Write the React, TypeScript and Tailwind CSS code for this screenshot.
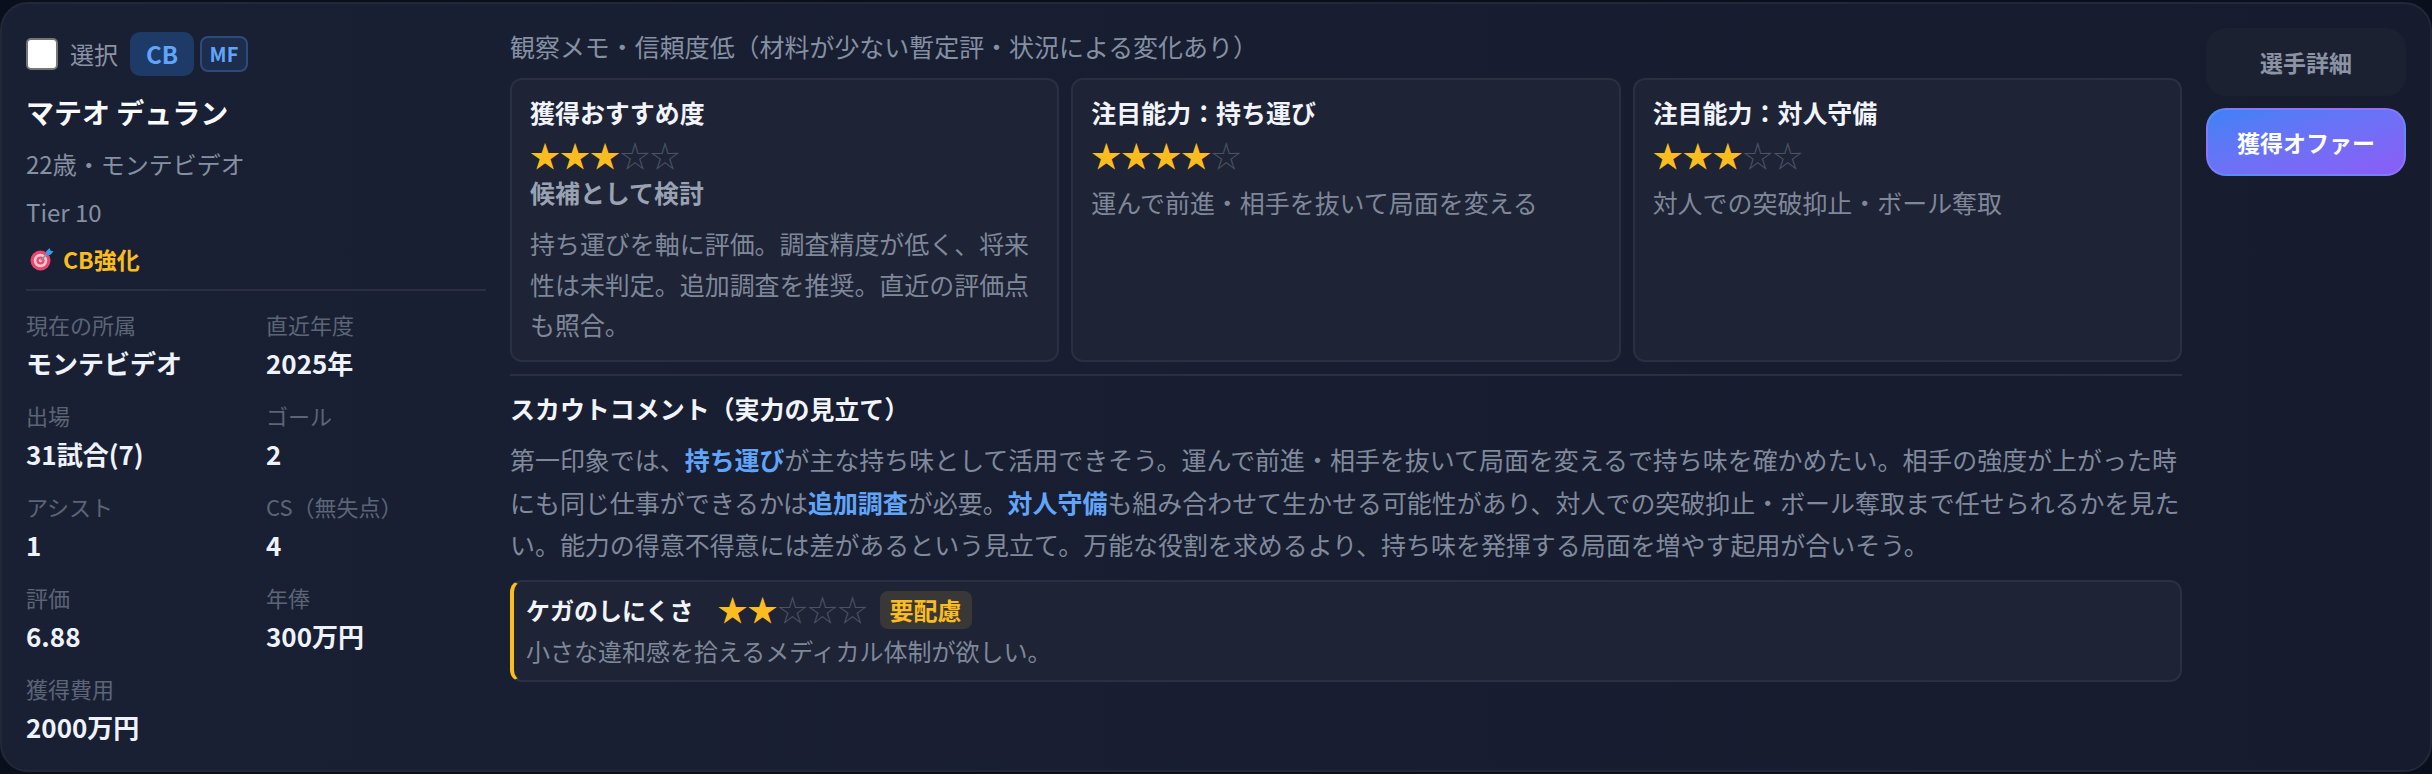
const fontStack = '[font-family:"Noto_Sans_CJK_JP","Noto_Sans",sans-serif]';

interface Stat {
  label: string;
  value: string;
}

const stats: Stat[] = [
  { label: '現在の所属', value: 'モンテビデオ' },
  { label: '直近年度', value: '2025年' },
  { label: '出場', value: '31試合(7)' },
  { label: 'ゴール', value: '2' },
  { label: 'アシスト', value: '1' },
  { label: 'CS（無失点）', value: '4' },
  { label: '評価', value: '6.88' },
  { label: '年俸', value: '300万円' },
  { label: '獲得費用', value: '2000万円' },
];

function Stars({ count }: { count: number }) {
  return (
    <span className="inline-flex text-[30px] leading-[40px]">
      {[1, 2, 3, 4, 5].map(n => (
        <span key={n} className={n <= count ? 'text-[#fbbc1f]' : 'text-[#4b5264]'}>
          {n <= count ? '★' : '☆'}
        </span>
      ))}
    </span>
  );
}

function TargetIcon() {
  return (
    <svg width="24" height="24" viewBox="0 0 24 24" className="shrink-0">
      <circle cx="10.5" cy="13.5" r="10" fill="#e8486e" />
      <circle cx="10.5" cy="13.5" r="6.8" fill="#f5c6d0" />
      <circle cx="10.5" cy="13.5" r="4" fill="#e8486e" />
      <circle cx="10.5" cy="13.5" r="1.8" fill="#f5c6d0" />
      <path d="M10.5 13.5 L20 4" stroke="#8a93a3" strokeWidth="1.6" />
      <path d="M16 4.5 L19.5 1 L20.5 3.5 L23.5 4.5 L20 8 L16 8 Z" fill="#3b9ae8" />
    </svg>
  );
}

function AbilityCard({ title, stars, verdict, children }: {
  title: string;
  stars: number;
  verdict?: string;
  children: React.ReactNode;
}) {
  return (
    <div className="border-2 border-[#2a3042] rounded-[12px] bg-[#1e2336] px-[18px] pt-[12px] pb-[14px]">
      <div className="text-[24.96px] leading-[40px] font-bold text-[#f1f4fa]">{title}</div>
      <div className="mt-[2px] h-[40px]">
        <Stars count={stars} />
      </div>
      {verdict && (
        <div className="mt-[1px] text-[24.96px] leading-[35px] font-bold text-[#98a2b3]">{verdict}</div>
      )}
      <p className={`text-[24.96px] leading-[40.5px] text-[#7f8899] ${verdict ? 'mt-[13px]' : 'mt-[8px]'}`}>
        {children}
      </p>
    </div>
  );
}

export default function App() {
  return (
    <div className={`min-h-screen bg-[#0a0f1e] py-[2px] ${fontStack}`}>
      <div className="h-[770px] rounded-[28px] border-2 border-[#232839] bg-gradient-to-r from-[#1a2033] to-[#161b2e] px-[24px] pt-[22px] flex gap-[24px]">
        {/* left column */}
        <div className="w-[460px] shrink-0 pt-[2px]">
          <div className="flex items-center h-[52px]">
            <input type="checkbox" className="appearance-none w-[32px] h-[32px] rounded-[5px] bg-white border-2 border-[#767676]" />
            <span className="ml-[12px] text-[24px] text-[#8b93a5]">選択</span>
            <span className="ml-[12px] w-[64px] h-[44px] rounded-[10px] bg-[#1e3a66] text-[#60a5fa] text-[24px] font-bold flex items-center justify-center">CB</span>
            <span className="ml-[6px] w-[48px] h-[36px] rounded-[8px] bg-[#1c2d4d] border-2 border-[#2c4a7c] text-[#60a5fa] text-[20px] font-bold flex items-center justify-center">MF</span>
          </div>
          <div className="mt-[10px] text-[28px] leading-[45px] font-bold text-[#f8fafc]">マテオ デュラン</div>
          <div className="mt-[10px] text-[24px] leading-[38px] text-[#8590a3]">22歳・モンテビデオ</div>
          <div className="mt-[10px] text-[24px] leading-[38px] text-[#8590a3]">Tier 10</div>
          <div className="mt-[9px] flex items-center gap-[9px] pl-[4px] text-[23px] leading-[38px] font-bold text-[#fbbc1f]">
            <TargetIcon />
            <span>CB強化</span>
          </div>
          <div className="mt-[11px] h-[2px] bg-[#2a3042]" />
          <div className="mt-[16px] grid grid-cols-2 gap-x-[20px] gap-y-[14px]">
            {stats.map(s => (
              <div key={s.label}>
                <div className="text-[22px] leading-[35px] text-[#5b6577]">{s.label}</div>
                <div className="text-[26px] leading-[42px] font-bold text-[#eef2fb]">{s.value}</div>
              </div>
            ))}
          </div>
        </div>

        {/* main column */}
        <div className="flex-1 min-w-0">
          <div className="text-[24.96px] leading-[40px] text-[#8590a3]">観察メモ・信頼度低（材料が少ない暫定評・状況による変化あり）</div>
          <div className="mt-[12px] grid grid-cols-3 gap-[12px] h-[284px]">
            <AbilityCard title="獲得おすすめ度" stars={3} verdict="候補として検討">
              持ち運びを軸に評価。調査精度が低く、将来性は未判定。追加調査を推奨。直近の評価点も照合。
            </AbilityCard>
            <AbilityCard title="注目能力：持ち運び" stars={4}>
              運んで前進・相手を抜いて局面を変える
            </AbilityCard>
            <AbilityCard title="注目能力：対人守備" stars={3}>
              対人での突破抑止・ボール奪取
            </AbilityCard>
          </div>
          <div className="mt-[12px] h-[2px] bg-[#2a3042]" />
          <div className="mt-[12px] text-[24.96px] leading-[40px] font-bold text-[#f1f4fa]">スカウトコメント（実力の見立て）</div>
          <p className="mt-[10px] text-[24.96px] leading-[42.5px] text-[#808a9c]">
            第一印象では、<b className="text-[#60a5fa]">持ち運び</b>が主な持ち味として活用できそう。運んで前進・相手を抜いて局面を変えるで持ち味を確かめたい。相手の強度が上がった時にも同じ仕事ができるかは<b className="text-[#60a5fa]">追加調査</b>が必要。<b className="text-[#60a5fa]">対人守備</b>も組み合わせて生かせる可能性があり、対人での突破抑止・ボール奪取まで任せられるかを見たい。能力の得意不得意には差があるという見立て。万能な役割を求めるより、持ち味を発揮する局面を増やす起用が合いそう。
          </p>
          <div className="mt-[14px] h-[102px] rounded-[12px] border-2 border-l-4 border-[#2a3042] border-l-[#fbbc1f] bg-[#1e2336] pl-[12px] pt-[8px]">
            <div className="flex items-center h-[40px]">
              <span className="text-[24px] font-bold text-[#f1f4fa]">ケガのしにくさ</span>
              <span className="ml-[24px] -mt-[4px]"><Stars count={2} /></span>
              <span className="ml-[12px] h-[38px] w-[92px] rounded-[8px] bg-[#3a3836] text-[24px] font-bold text-[#fbbc1f] flex items-center justify-center">要配慮</span>
            </div>
            <div className="mt-[2px] text-[24px] leading-[38px] text-[#7f8899]">小さな違和感を拾えるメディカル体制が欲しい。</div>
          </div>
        </div>

        {/* actions */}
        <div className="w-[200px] shrink-0 flex flex-col gap-[12px] pt-[2px]">
          <button className="h-[68px] rounded-[20px] bg-[#1c2132] text-[23px] font-bold text-[#8b93a5]">選手詳細</button>
          <button className="h-[68px] rounded-[20px] bg-gradient-to-br from-[#3b82f6] to-[#8b5cf6] border-2 border-white/10 text-[23px] font-bold text-white">獲得オファー</button>
        </div>
      </div>
    </div>
  );
}
